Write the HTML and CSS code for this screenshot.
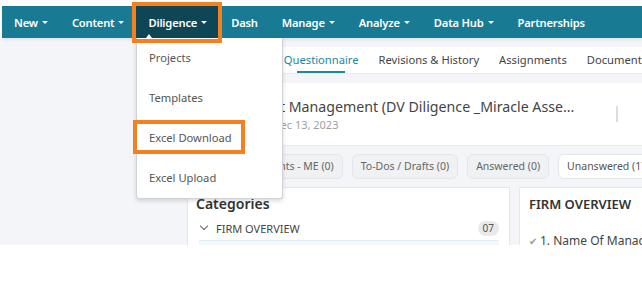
FILE: index.html
```html
<!DOCTYPE html>
<html lang="en">
<head>
    <meta charset="UTF-8">
    <meta name="viewport" content="width=device-width, initial-scale=1.0">
    <title>Diligence - Questionnaire</title>
    <link rel="stylesheet" href="styles.css">
</head>
<body>
    <div class="page">
        <div class="topbar">
            <nav class="nav">
                <a class="nav-item">New<span class="caret"></span></a>
                <a class="nav-item">Content<span class="caret"></span></a>
                <a class="nav-item active">Diligence<span class="caret"></span></a>
                <a class="nav-item">Dash</a>
                <a class="nav-item">Manage<span class="caret"></span></a>
                <a class="nav-item">Analyze<span class="caret"></span></a>
                <a class="nav-item">Data Hub<span class="caret"></span></a>
                <a class="nav-item">Partnerships</a>
            </nav>
        </div>

        <div class="main">
            <div class="sidebar"></div>
            <div class="content">
                <div class="tabs">
                    <a class="tab">Overview</a>
                    <a class="tab active">Questionnaire</a>
                    <a class="tab">Revisions &amp; History</a>
                    <a class="tab">Assignments</a>
                    <a class="tab">Documents</a>
                </div>

                <div class="title-card">
                    <div class="title-text">
                        <div class="title">Miracle Asset Management (DV Diligence _Miracle Asse...</div>
                        <div class="date">Last Updated: Dec 13, 2023</div>
                    </div>
                    <div class="divider"></div>
                </div>

                <div class="chips">
                    <span class="chip">Assignments - ME (0)</span>
                    <span class="chip">To-Dos / Drafts (0)</span>
                    <span class="chip">Answered (0)</span>
                    <span class="chip current">Unanswered (17)</span>
                </div>

                <div class="panels">
                    <div class="panel categories">
                        <h3>Categories</h3>
                        <div class="cat-row">
                            <span class="chev"></span>
                            <span class="cat-name">FIRM OVERVIEW</span>
                            <span class="badge">07</span>
                        </div>
                        <div class="cat-row selected"></div>
                    </div>
                    <div class="panel questions">
                        <h3>FIRM OVERVIEW</h3>
                        <div class="question"><span class="check">&#10004;</span>1. Name Of Management Company</div>
                    </div>
                </div>
            </div>
        </div>

        <!-- Diligence dropdown -->
        <span class="pointer"></span>
        <ul class="dropdown">
            <li>Projects</li>
            <li>Templates</li>
            <li>Excel Download</li>
            <li>Excel Upload</li>
        </ul>

        <!-- highlight annotations -->
        <div class="mark mark-menu"></div>
        <div class="mark mark-item"></div>
    </div>
</body>
</html>
```

FILE: styles.css
```css
body {
    margin: 0;
    background: #fff;
    font-family: "Noto Sans", "Open Sans", Arial, sans-serif;
    color: #444;
}
.page {
    position: relative;
    height: 245px;
    overflow: hidden;
    background-color: #f4f5f8;
}
.topbar {
    background: #fff;
    padding: 6px 0 0 2px;
}
.nav {
    display: flex;
    height: 32px;
    background-color: #187b93;
    box-shadow: 0 2px 3px rgba(0, 0, 0, 0.08);
}
.nav-item {
    display: flex;
    align-items: center;
    padding: 0 12px;
    color: #fff;
    font-size: 11.2px;
    font-weight: 600;
    letter-spacing: -0.2px;
    white-space: nowrap;
}
.nav-item.active {
    background-color: #0e4656;
}
.caret {
    display: inline-block;
    width: 0;
    height: 0;
    margin-left: 4px;
    border-left: 3px solid transparent;
    border-right: 3px solid transparent;
    border-top: 3px solid #fff;
}
.main {
    display: flex;
}
.sidebar {
    flex: 0 0 187px;
}
.content {
    flex: 0 0 600px;
    padding-top: 9px;
}
.tabs {
    display: flex;
    gap: 20px;
    height: 26px;
    padding-left: 28px;
    background: #fff;
    border-bottom: 1px solid #e8eaee;
    font-size: 11.2px;
}
.tab {
    position: relative;
    line-height: 26px;
    color: #444;
    white-space: nowrap;
}
.tab.active {
    color: #1a88a3;
}
.tab.active::after {
    content: "";
    position: absolute;
    left: 50%;
    bottom: 0;
    width: 48px;
    margin-left: -24px;
    height: 2px;
    background: #1a88a3;
}
.title-card {
    display: flex;
    align-items: center;
    margin-top: 9px;
    height: 62px;
    padding: 0 0 0 10px;
    background: #fff;
    border-bottom: 1px solid #e8eaee;
}
.title-text {
    width: 419px;
}
.title {
    font-size: 14.2px;
    color: #444;
    white-space: nowrap;
}
.date {
    margin-top: 1px;
    padding-left: 1px;
    font-size: 11px;
    color: #a0a0a0;
}
.divider {
    width: 2px;
    height: 16px;
    background: #ddd;
}
.chips {
    display: flex;
    gap: 9px;
    margin-top: 8px;
    padding-left: 35px;
}
.chip {
    padding: 4px 8px;
    font-size: 10.5px;
    line-height: 15px;
    color: #666;
    background: #f0f1f3;
    border: 1px solid #e5e6e9;
    border-radius: 6px;
    white-space: nowrap;
}
.chip.current {
    background: #fff;
    color: #555;
}
.panels {
    display: flex;
    gap: 9px;
    margin-top: 8px;
}
.panel {
    background: #fff;
    border: 1px solid #e3e6ea;
    height: 80px;
}
.categories {
    width: 321px;
}
.questions {
    flex: 1;
}
.panel h3 {
    margin: 0;
    font-size: 14px;
    font-weight: 600;
    color: #333;
}
.categories h3 {
    padding: 6px 8px 0;
}
.cat-row {
    display: flex;
    align-items: center;
    height: 24px;
    margin: 3px 10px 0 11px;
    font-size: 11px;
}
.cat-row.selected {
    height: 20px;
    margin-top: 0;
    border-top: 1px solid #e1edf2;
    background: #f3f9fb;
}
.chev {
    width: 5px;
    height: 5px;
    margin: -4px 9px 0 2px;
    border-right: 1px solid #666;
    border-bottom: 1px solid #666;
    transform: rotate(45deg);
}
.cat-name {
    flex: 1;
    color: #444;
}
.badge {
    padding: 0 5px;
    line-height: 15px;
    font-size: 10px;
    color: #555;
    background: #e9e9e9;
    border-radius: 8px;
}
.questions h3 {
    padding: 7px 9px 0;
    font-size: 13px;
}
.question {
    padding: 19px 10px 0 9px;
    font-size: 12px;
    color: #444;
    white-space: nowrap;
}
.check {
    margin-right: 3px;
    color: #999;
    font-size: 10px;
}
.pointer {
    position: absolute;
    left: 146px;
    top: 34px;
    width: 0;
    height: 0;
    border-left: 3px solid transparent;
    border-right: 3px solid transparent;
    border-bottom: 4px solid #fff;
}
.dropdown {
    position: absolute;
    left: 136px;
    top: 38px;
    width: 145px;
    margin: 0;
    padding: 0;
    list-style: none;
    background: #fff;
    border: 1px solid #cfd2d6;
    border-top: none;
    border-radius: 0 0 3px 3px;
    box-shadow: 0 2px 4px rgba(0, 0, 0, 0.15);
}
.dropdown li {
    height: 40px;
    line-height: 40px;
    padding-left: 12px;
    font-size: 11.2px;
    color: #555;
}
.mark {
    position: absolute;
    border: 4px solid #f5801f;
}
.mark-menu {
    left: 132px;
    top: 2px;
    width: 82px;
    height: 33px;
}
.mark-item {
    left: 133px;
    top: 120px;
    width: 104px;
    height: 26px;
}
```
